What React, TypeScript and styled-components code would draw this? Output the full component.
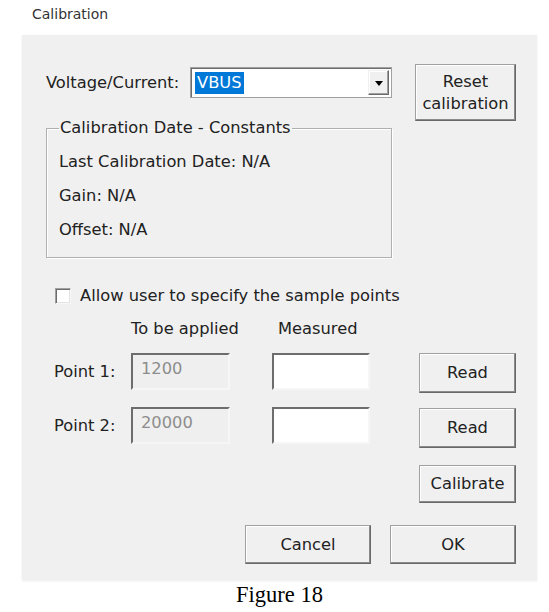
import React, { useState } from 'react'
import styled, { createGlobalStyle } from 'styled-components'

const GlobalStyle = createGlobalStyle`
  body {
    margin: 0;
    background: #fff;
    font-family: "DejaVu Sans", "Noto Sans", sans-serif;
    color: #222;
  }
`

const Page = styled.div`
  width: 549px;
  height: 612px;
  overflow: hidden;
`

const Title = styled.div`
  padding: 6px 0 0 32px;
  font-size: 14px;
  line-height: 16px;
  color: #333;
`

const Dialog = styled.div`
  margin: 13px 0 0 22px;
  width: 515px;
  height: 545px;
  box-sizing: border-box;
  padding: 29px 21px 0 24px;
  background: #f0f0f0;
  box-shadow: 0 1px 2px rgba(0,0,0, .08);
  font-size: 16.3px;
  display: flex;
  flex-direction: column;
`

const TopRow = styled.div`
  display: flex;
  align-items: flex-start;
  justify-content: space-between;
`

const LeftColumn = styled.div`
  width: 346px;
  margin-top: 3px;
  display: flex;
  flex-direction: column;
`

const ComboRow = styled.div`
  display: flex;
  align-items: center;
  justify-content: space-between;
`

const Text = styled.span`
  line-height: 20px;
  white-space: nowrap;
`

const Combo = styled.div`
  width: 202px;
  height: 31px;
  box-sizing: border-box;
  background: #fff;
  border: 1px solid #a0a0a0;
  box-shadow: inset 1px 1px 0 #6d6d6d;
  display: flex;
  align-items: center;
  padding: 2px 2px 2px 4px;
`

const Selected = styled.span`
  background: #0078d7;
  color: #fff;
  line-height: 22px;
  padding: 0 2px;
  margin-top: 1px;
`

const DropButton = styled.div`
  margin-left: auto;
  width: 21px;
  height: 100%;
  box-sizing: border-box;
  background: #f0f0f0;
  border: 1px solid;
  border-color: #f0f0f0 #696969 #696969 #f0f0f0;
  box-shadow: inset -1px -1px 0 #a0a0a0, inset 1px 1px 0 #fff;
  display: flex;
  align-items: center;
  justify-content: center;
`

const Arrow = styled.span`
  width: 0;
  height: 0;
  border-left: 4px solid transparent;
  border-right: 4px solid transparent;
  border-top: 5px solid #000;
  margin-top: 2px;
`

const GroupBox = styled.fieldset`
  margin: 20px 0 0;
  padding: 0 12px 17px;
  border: 1px solid #b0b0b0;
  box-shadow: 1px 1px 0 #fff, inset 1px 1px 0 #fff;
  display: flex;
  flex-direction: column;
  gap: 14px;
`

const GroupLegend = styled.legend`
  padding: 0 1px;
  line-height: 20px;
  margin-bottom: 14px;
`

const Button = styled.button<{ $w: number; $h: number }>`
  width: ${p => p.$w}px;
  height: ${p => p.$h}px;
  box-sizing: border-box;
  padding: 0;
  font: inherit;
  color: #222;
  line-height: 22px;
  background: #f0f0f0;
  border: 1px solid;
  border-color: #a0a0a0 #696969 #696969 #a0a0a0;
  box-shadow: inset -1px -1px 0 #8a8a8a, inset 1px 1px 0 #fff;
  cursor: pointer;
`

const CheckRow = styled.label`
  margin: 28px 0 0 9px;
  display: flex;
  align-items: center;
  gap: 9px;
  cursor: pointer;
`

const CheckBox = styled.input`
  appearance: none;
  margin: 0;
  width: 16px;
  height: 16px;
  box-sizing: border-box;
  background: #fff;
  border: 1px solid;
  border-color: #a0a0a0 #f6f6f6 #f6f6f6 #a0a0a0;
  box-shadow: inset 1px 1px 0 #6d6d6d, inset -1px -1px 0 #e3e3e3;
  &:checked::after {
    content: '✓';
    display: block;
    font-size: 12px;
    line-height: 13px;
    text-align: center;
  }
`

const PointGrid = styled.div`
  margin-top: 13px;
  display: grid;
  grid-template-columns: 85px 141px 98px 1fr;
  grid-template-rows: 20px 40px 41px 38px;
  row-gap: 14px;
  align-items: start;
`

const ColumnHead = styled(Text)<{ $indent?: number }>`
  padding-left: ${p => p.$indent || 0}px;
`

const PointLabel = styled(Text)`
  padding: 9px 0 0 8px;
`

const ValueBox = styled.input<{ $w: number }>`
  width: ${p => p.$w}px;
  height: 37px;
  box-sizing: border-box;
  margin: 0;
  padding: 0 0 6px 8px;
  font: inherit;
  color: #222;
  background: #fff;
  border: 2px solid;
  border-color: #6d6d6d #f6f6f6 #f6f6f6 #6d6d6d;
  outline: none;
  &:disabled {
    background: #efefef;
    color: #8d8d8d;
  }
`

const ButtonCell = styled.div<{ $shift?: number }>`
  display: flex;
  justify-content: flex-end;
  margin-top: ${p => p.$shift || 0}px;
`

const Footer = styled.div`
  margin-top: 25px;
  display: flex;
  justify-content: flex-end;
  gap: 19px;
`

const Caption = styled.div`
  width: 515px;
  margin-left: 22px;
  text-align: center;
  font-family: "Liberation Serif", "Times New Roman", serif;
  font-size: 22.5px;
  line-height: 30px;
  color: #000;
`

const App: React.FC = () => {
  const [custom, setCustom] = useState(false)
  const [measured, setMeasured] = useState(['', ''])

  const points = [
    { label: 'Point 1:', applied: '1200' },
    { label: 'Point 2:', applied: '20000' },
  ]

  const setPoint = (i: number, v: string) => {
    const next = [...measured]
    next[i] = v
    setMeasured(next)
  }

  return (
    <Page>
      <GlobalStyle />
      <Title>Calibration</Title>
      <Dialog>
        <TopRow>
          <LeftColumn>
            <ComboRow>
              <Text>Voltage/Current:</Text>
              <Combo>
                <Selected>VBUS</Selected>
                <DropButton>
                  <Arrow />
                </DropButton>
              </Combo>
            </ComboRow>
            <GroupBox>
              <GroupLegend>Calibration Date - Constants</GroupLegend>
              <Text>Last Calibration Date: N/A</Text>
              <Text>Gain: N/A</Text>
              <Text>Offset: N/A</Text>
            </GroupBox>
          </LeftColumn>
          <Button $w={101} $h={57}>
            Reset<br />calibration
          </Button>
        </TopRow>

        <CheckRow>
          <CheckBox
            type='checkbox'
            checked={custom}
            onChange={() => setCustom(!custom)}
          />
          <Text>Allow user to specify the sample points</Text>
        </CheckRow>

        <PointGrid>
          <span />
          <ColumnHead>To be applied</ColumnHead>
          <ColumnHead $indent={6}>Measured</ColumnHead>
          <span />
          {points.map((p, i) => (
            <React.Fragment key={p.label}>
              <PointLabel>{p.label}</PointLabel>
              <ValueBox $w={99} disabled={!custom} defaultValue={p.applied} />
              <ValueBox
                $w={98}
                value={measured[i]}
                onChange={e => setPoint(i, e.target.value)}
              />
              <ButtonCell $shift={i}>
                <Button $w={97} $h={40}>Read</Button>
              </ButtonCell>
            </React.Fragment>
          ))}
          <span />
          <span />
          <span />
          <ButtonCell $shift={3}>
            <Button $w={97} $h={38}>Calibrate</Button>
          </ButtonCell>
        </PointGrid>

        <Footer>
          <Button $w={126} $h={39}>Cancel</Button>
          <Button $w={126} $h={39}>OK</Button>
        </Footer>
      </Dialog>
      <Caption>Figure 18</Caption>
    </Page>
  )
}

export default App
